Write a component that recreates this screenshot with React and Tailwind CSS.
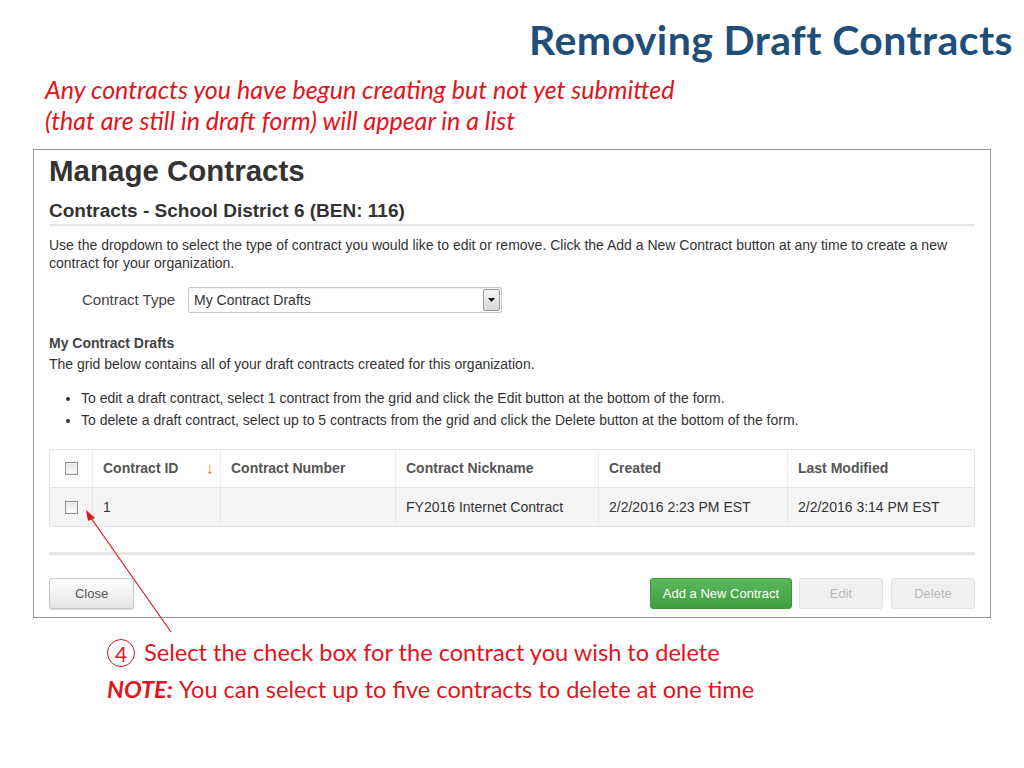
import React from 'react';

const Checkbox = () => (
  <span className="inline-block w-[13px] h-[13px] border border-[#8f8f8f] bg-gradient-to-b from-[#e6e6e6] to-[#fafafa] shadow-[inset_0_0_0_1px_#f4f4f4]" />
);

const columns = [
  { label: 'Contract ID', width: 'w-[128px]', sort: true },
  { label: 'Contract Number', width: 'w-[175px]' },
  { label: 'Contract Nickname', width: 'w-[203px]' },
  { label: 'Created', width: 'w-[189px]' },
  { label: 'Last Modified', width: 'flex-1' },
];

const row = ['1', '', 'FY2016 Internet Contract', '2/2/2016 2:23 PM EST', '2/2/2016 3:14 PM EST'];

const App = () => {
  return (
    <div className="relative w-[1024px] h-[768px] bg-white overflow-hidden">
      {/* Slide title */}
      <div className="pt-[16px] pr-[11px] text-right font-['Lato','Open_Sans',sans-serif] font-bold text-[41px] tracking-[0.4px] leading-[48px] text-[#1f4e79]">
        Removing Draft Contracts
      </div>

      {/* Intro note */}
      <div className="mt-[10px] ml-[45px] font-['Lato','Open_Sans',sans-serif] italic text-[25px] leading-[31px] text-[#e3141c]">
        <div>Any contracts you have begun creating but not yet submitted</div>
        <div>(that are still in draft form) will appear in a list</div>
      </div>

      {/* Screenshot of the page */}
      <div className="mt-[13px] ml-[33px] w-[958px] border border-[#9a9a9a] pl-[15px] pr-[15px] pt-[4px] pb-[8px] font-['Liberation_Sans',Arial,sans-serif] text-[#333]">
        <div className="font-bold text-[29.5px] leading-[34px] text-[#333]">Manage Contracts</div>
        <div className="mt-[12px] pb-[2px] border-b-2 border-[#e6e6e6] font-bold text-[19px] leading-[22px]">
          Contracts - School District 6 (BEN: 116)
        </div>
        <p className="mt-[10px] text-[14px] leading-[18px]">
          Use the dropdown to select the type of contract you would like to edit or remove. Click the Add a New Contract button at any time to create a new contract for your organization.
        </p>

        <div className="mt-[15px] flex items-center text-[14px]">
          <span className="ml-[33px] w-[106px] text-[15px] text-[#444]">Contract Type</span>
          <div className="flex items-center w-[314px] h-[26px] border border-[#c8c8c8] rounded-[2px] pl-[5px] pr-[1px] shadow-[inset_0_1px_1px_rgba(0,0,0,0.05)]">
            <span className="flex-1">My Contract Drafts</span>
            <span className="flex items-center justify-center w-[17px] h-[22px] border border-[#9a9a9a] rounded-[2px] bg-gradient-to-b from-[#f6f6f6] to-[#d8d8d8]">
              <svg width="7" height="4" viewBox="0 0 7 4"><path d="M0 0h7L3.5 4z" fill="#111" /></svg>
            </span>
          </div>
        </div>

        <div className="mt-[21px] font-bold text-[14px] leading-[18px] text-[#444]">My Contract Drafts</div>
        <div className="mt-[3px] text-[14px] leading-[18px]">
          The grid below contains all of your draft contracts created for this organization.
        </div>
        <ul className="mt-[14px] ml-[32px] list-disc text-[14px] leading-[22px]">
          <li>To edit a draft contract, select 1 contract from the grid and click the Edit button at the bottom of the form.</li>
          <li>To delete a draft contract, select up to 5 contracts from the grid and click the Delete button at the bottom of the form.</li>
        </ul>

        {/* Grid */}
        <div className="mt-[18px] border border-[#e3e3e3] rounded-[3px] overflow-hidden text-[14px]">
          <div className="flex h-[38px] bg-white border-b border-[#e6e6e6]">
            <div className="w-[43px] flex items-center justify-center border-r border-[#eeeeee]">
              <Checkbox />
            </div>
            {columns.map((c, i) => (
              <div
                key={c.label}
                className={`${c.width} flex items-center justify-between pl-[10px] pr-[6px] font-bold text-[#555] ${i < columns.length - 1 ? 'border-r border-[#eeeeee]' : ''}`}
              >
                <span>{c.label}</span>
                {c.sort && <span className="text-[#e0772e] font-normal text-[17px] leading-none">↓</span>}
              </div>
            ))}
          </div>
          <div className="flex h-[38px] bg-[#f5f5f5]">
            <div className="w-[43px] flex items-center justify-center border-r border-[#e9e9e9]">
              <Checkbox />
            </div>
            {row.map((v, i) => (
              <div
                key={i}
                className={`${columns[i].width} flex items-center pl-[10px] text-[#333] ${i < row.length - 1 ? 'border-r border-[#e9e9e9]' : ''}`}
              >
                {v}
              </div>
            ))}
          </div>
        </div>

        <div className="mt-[25px] h-[3px] bg-[#e6e6e6]" />

        {/* Footer buttons */}
        <div className="mt-[23px] flex items-center text-[13px]">
          <button className="w-[85px] h-[31px] rounded-[3px] border border-[#c9c9c9] bg-gradient-to-b from-white to-[#e4e4e4] text-[#555] shadow-[0_1px_1px_rgba(0,0,0,0.15)]">
            Close
          </button>
          <div className="flex-1" />
          <button className="w-[142px] h-[31px] rounded-[3px] border border-[#3c963c] bg-gradient-to-b from-[#5cb85c] to-[#3f9f3f] text-white">
            Add a New Contract
          </button>
          <button className="ml-[7px] w-[84px] h-[31px] rounded-[3px] border border-[#e2e2e2] bg-[#f0f0f0] text-[#b9b9b9]">
            Edit
          </button>
          <button className="ml-[8px] w-[84px] h-[31px] rounded-[3px] border border-[#e2e2e2] bg-[#f0f0f0] text-[#b9b9b9]">
            Delete
          </button>
        </div>
      </div>

      {/* Step note */}
      <div className="mt-[18px] ml-[107px] font-['Lato','Open_Sans',sans-serif] text-[23.6px] text-[#e3141c]">
        <div className="flex items-center h-[34px]">
          <span className="flex items-center justify-center w-[28px] h-[28px] rounded-full border-[1.5px] border-[#e3141c] text-[21px] leading-none mr-[9px]">4</span>
          <span>Select the check box for the contract you wish to delete</span>
        </div>
        <div className="h-[40px] flex items-center">
          <span className="font-bold italic mr-[6px]">NOTE:</span>
          <span>You can select up to five contracts to delete at one time</span>
        </div>
      </div>

      {/* Pointer arrow */}
      <svg className="absolute inset-0 pointer-events-none" width="1024" height="768">
        <line x1="171" y1="632" x2="91" y2="518" stroke="#e3141c" strokeWidth="1.2" />
        <path d="M86 510 L95 518 L88 521 Z" fill="#e3141c" />
      </svg>
    </div>
  );
};

export default App;
